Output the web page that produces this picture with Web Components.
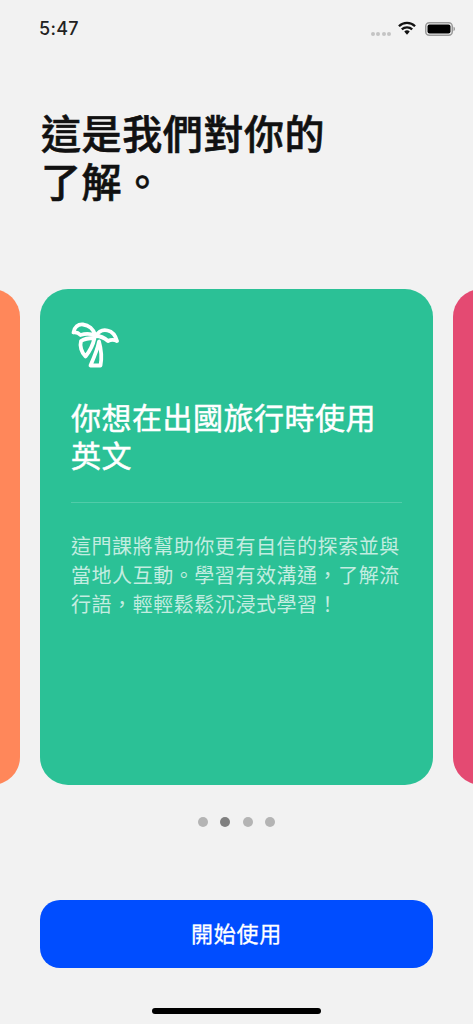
<!DOCTYPE html>
<html lang="zh-Hant">
<head>
<meta charset="utf-8">
<title>Onboarding</title>
<style>
  html, body { margin: 0; height: 100%; background: #f2f2f2; }
  body { font-family: "Noto Sans CJK TC", "Noto Sans", sans-serif; overflow: hidden; }
</style>
</head>
<body>
<onboarding-screen>
  <span slot="title">這是我們對你的<br>了解。</span>
  <topic-card slot="current">
    <span slot="title">你想在出國旅行時使用<br>英文</span>
    這門課將幫助你更有自信的探索並與當地人互動。學習有效溝通，了解流行語，輕輕鬆鬆沉浸式學習！
  </topic-card>
  <span slot="action">開始使用</span>
</onboarding-screen>

<script>
class StatusBar extends HTMLElement {
  constructor() {
    super();
    this.attachShadow({ mode: 'open' });
    this.shadowRoot.innerHTML = `
      <style>
        :host { display: flex; align-items: center; height: 58px; padding: 0 18px 0 39px; box-sizing: border-box; color: #222; }
        .time { font: 500 18px/1 Inter, "Liberation Sans", sans-serif; flex: 1; letter-spacing: .3px; }
        .signal { display: flex; gap: 1.500px; margin-right: 7px; margin-top: 9px; }
        .signal i { width: 4px; height: 4px; border-radius: 50%; background: #c4c4c4; }
        svg { display: block; }
        .wifi { margin-right: 9px; margin-top: -2px; }
        .batt { margin-top: -1px; }
      </style>
      <span class="time">5:47</span>
      <span class="signal"><i></i><i></i><i></i><i></i></span>
      <svg class="wifi" width="18" height="15" viewBox="0 0 19 15">
        <path d="M1 5.200a12 12 0 0 1 17 0M4 8.400a8 8 0 0 1 11 0" fill="none" stroke="#111" stroke-width="2.400"/>
        <path d="M6.600 10.600a4.200 4.200 0 0 1 5.800 0L9.500 14z" fill="#111"/>
      </svg>
      <svg class="batt" width="30" height="14" viewBox="0 0 30 14">
        <rect x=".75" y=".75" width="26.500" height="12.500" rx="3.500" fill="none" stroke="#999" stroke-width="1.500"/>
        <rect x="2.500" y="2.500" width="23" height="9" rx="2" fill="#000"/>
        <path d="M28.500 4.800v4.400c1-.3 1.500-1.200 1.500-2.200s-.5-1.900-1.500-2.200z" fill="#999"/>
      </svg>`;
  }
}

class TopicCard extends HTMLElement {
  constructor() {
    super();
    this.attachShadow({ mode: 'open' });
    this.shadowRoot.innerHTML = `
      <style>
        :host { display: block; flex: 0 0 393px; height: 496px; box-sizing: border-box; padding: 33px 31px; border-radius: 28px; background: #2bc196; color: #fff; }
        svg { display: block; margin-bottom: 29px; }
        h2 { margin: 0; font-size: 30px; line-height: 38px; font-weight: 400; letter-spacing: .5px; -webkit-text-stroke: .5px #fff; }
        hr { border: 0; height: 1px; background: rgba(255,255,255,.18); margin: 29px 0 28px; }
        p { margin: 0; font-size: 20px; line-height: 29px; letter-spacing: .55px; color: rgba(255,255,255,.72); }
      </style>
      <svg width="48" height="46" viewBox="0 0 48 46" fill="none" stroke="#fff" stroke-width="3.800" stroke-linejoin="round" stroke-linecap="round">
        <path d="M19.500 43.500h10c1.500-8 .8-16-1.500-24-1.500 8-5 16-8.500 24z"/>
        <path d="M24.500 13.500C22.500 7 17.500 3 12 2.500 7 2 3.500 5 2.500 10.500c3-.5 5 .5 7 2.500 5-1.500 10-1.500 15 .5z"/>
        <path d="M25 14c2.500-4.500 7-6.500 11.500-5.500 5 1 8 5 9.500 10.500-3-1.500-6-1.500-9 0-3.500-3-8-5-12-5z"/>
        <path d="M23.500 16c-5 0-10 .5-13.500 3-1.500 5 .5 11.500 4.500 15.500 4-5 7.500-11.500 9-18.500z"/>
      </svg>
      <h2><slot name="title"></slot></h2>
      <hr>
      <p><slot></slot></p>`;
  }
}

class CardCarousel extends HTMLElement {
  constructor() {
    super();
    this.attachShadow({ mode: 'open' });
    this.shadowRoot.innerHTML = `
      <style>
        :host { display: flex; justify-content: center; gap: 20px; overflow: hidden; }
        .side { flex: 0 0 393px; height: 496px; border-radius: 28px; }
        .prev { background: #ff875a; }
        .next { background: #e44a72; }
      </style>
      <div class="side prev"></div>
      <slot></slot>
      <div class="side next"></div>`;
  }
}

class PageDots extends HTMLElement {
  constructor() {
    super();
    this.attachShadow({ mode: 'open' });
    this.shadowRoot.innerHTML = `
      <style>
        :host { display: flex; justify-content: center; gap: 12.500px; }
        i { width: 10px; height: 10px; border-radius: 50%; background: #b4b4b4; }
        i.on { background: #808080; }
      </style>
      <i></i><i class="on"></i><i></i><i></i>`;
  }
}

class OnboardingScreen extends HTMLElement {
  constructor() {
    super();
    this.attachShadow({ mode: 'open' });
    this.shadowRoot.innerHTML = `
      <style>
        :host { display: flex; flex-direction: column; height: 1024px; color: #111; }
        h1 { margin: 50px 40px 0 41px; font-size: 40px; line-height: 48px; font-weight: 500; -webkit-text-stroke: .6px #111; letter-spacing: .6px; height: 181px; }
        page-dots { margin-top: 32px; }
        button { display: flex; align-items: center; justify-content: center; margin: 73px 40px 0; height: 68px; padding: 0 0 5px; border: 0; border-radius: 20px; background: #004dff; color: #fff; font: 400 22px/1 "Noto Sans CJK TC", sans-serif; -webkit-text-stroke: .3px #fff; letter-spacing: .8px; }
        .home { width: 169px; height: 6px; border-radius: 3px; background: #000; margin: 40px auto 0; }
      </style>
      <status-bar></status-bar>
      <h1><slot name="title"></slot></h1>
      <card-carousel><slot name="current"></slot></card-carousel>
      <page-dots></page-dots>
      <button><slot name="action"></slot></button>
      <div class="home"></div>`;
  }
}

customElements.define('status-bar', StatusBar);
customElements.define('topic-card', TopicCard);
customElements.define('card-carousel', CardCarousel);
customElements.define('page-dots', PageDots);
customElements.define('onboarding-screen', OnboardingScreen);
</script>
</body>
</html>
